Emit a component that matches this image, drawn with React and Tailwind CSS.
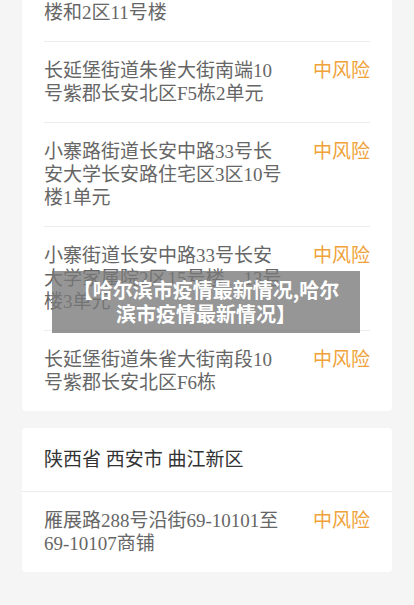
import React from 'react';

const font = { fontFamily: '"Liberation Serif", "Noto Sans CJK SC", serif' };

const firstCard = [
  { text: '长延堡街道朱雀大街南端10号紫郡长安北区F5栋2单元', risk: '中风险' },
  { text: '小寨路街道长安中路33号长安大学长安路住宅区3区10号楼1单元', risk: '中风险' },
  { text: '小寨街道长安中路33号长安大学家属院2区15号楼、13号楼3单元', risk: '中风险' },
  { text: '长延堡街道朱雀大街南段10号紫郡长安北区F6栋', risk: '中风险' },
];

const Row = ({ text, risk, first }) => (
  <div className={`flex justify-between py-[17px] ${first ? '' : 'border-t border-[#ececec]'}`}>
    <div className="w-[242px] text-[19px] leading-[23px] text-[#666]">{text}</div>
    <div className="text-[19px] leading-[23px] text-[#f0a238] whitespace-nowrap">{risk}</div>
  </div>
);

export default function App() {
  return (
    <div className="relative min-h-[605px] bg-[#f5f5f5] pb-[34px]" style={font}>
      <div className="mx-[22px] bg-white rounded-b-[4px]">
        <div className="mx-[22px]">
          <div className="pt-[1px] pb-[17px]">
            <div className="text-[19px] leading-[23px] text-[#666]">楼和2区11号楼</div>
          </div>
          {firstCard.map((r, i) => (
            <Row key={i} {...r} />
          ))}
        </div>
      </div>

      <div className="mx-[22px] mt-[17px] bg-white rounded-[4px]">
        <div className="px-[22px] py-[20px] text-[19px] leading-[23px] text-[#333]">
          陕西省 西安市 曲江新区
        </div>
        <div className="border-t border-[#ececec]">
          <div className="mx-[22px]">
            <Row first text="雁展路288号沿街69-10101至69-10107商铺" risk="中风险" />
          </div>
        </div>
      </div>

      <div
        className="absolute left-[52px] top-[271px] w-[308px] bg-[rgba(120,120,120,0.78)] px-[18px] py-[7px] text-center text-[20px] leading-[24px] font-bold text-white"
        style={{ fontFamily: '"Noto Sans CJK SC", sans-serif' }}
      >
        【哈尔滨市疫情最新情况,哈尔滨市疫情最新情况】
      </div>
    </div>
  );
}
